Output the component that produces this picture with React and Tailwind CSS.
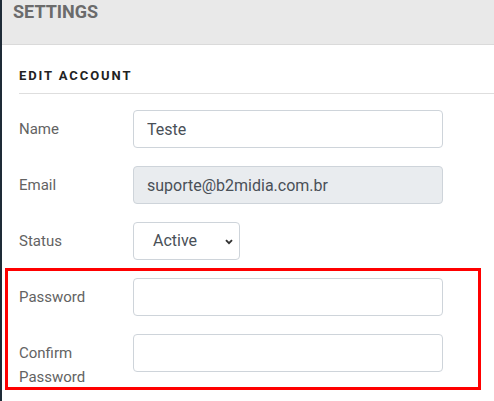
import React from "react";

function Row({ label, children, last }) {
  return (
    <div className={`flex ${last ? "" : "mb-[18px]"}`}>
      <div className="w-[114px] shrink-0 pt-[7px] text-[15px] leading-[24px] text-[#636363]">{label}</div>
      <div className="flex-1">{children}</div>
    </div>
  );
}

const inputCls =
  "w-[310px] h-[38px] rounded-[4px] border border-[#ced4da] bg-white pl-[13px] text-[16px] text-[#495057] outline-none";

export default function App() {
  return (
    <div className="relative flex h-[401px] w-full overflow-hidden bg-white" style={{ fontFamily: "Roboto, 'Liberation Sans', sans-serif" }}>
      <div className="w-[2px] shrink-0 bg-[#1e2b37]" />
      <div className="flex-1 min-w-0">
        <div className="h-[45px] border-b border-[#dadada] bg-[#e9e9e9] pl-[11px]">
          <div className="text-[18px] font-bold leading-[24px] text-[#6b6b6b]">SETTINGS</div>
        </div>
        <div className="pl-[17px]">
          <div className="mt-[23px] border-b border-[#dedede] pb-[9px]">
            <div className="text-[13px] font-bold leading-[16px] tracking-[1.9px] text-[#222]">EDIT ACCOUNT</div>
          </div>
          <div className="mt-[16px]">
            <Row label="Name">
              <input className={inputCls} defaultValue="Teste" />
            </Row>
            <Row label="Email">
              <input className={inputCls + " !bg-[#e9ecef]"} defaultValue="suporte@b2midia.com.br" readOnly />
            </Row>
            <Row label="Status">
              <div className="relative w-[107px] h-[38px] rounded-[4px] border border-[#ced4da] bg-white">
                <div className="pl-[19px] text-[16px] leading-[36px] text-[#495057]">Active</div>
                <svg className="absolute left-[91px] top-[16px]" width="8" height="6" viewBox="0 0 8 6">
                  <path d="M1 1.2 L4 4.2 L7 1.2" fill="none" stroke="#333" strokeWidth="1.9" />
                </svg>
              </div>
            </Row>
            <Row label="Password">
              <input className={inputCls} type="password" />
            </Row>
            <Row label={<>Confirm<br />Password</>} last>
              <input className={inputCls} type="password" />
            </Row>
          </div>
        </div>
      </div>
      <div className="absolute left-[5px] top-[268px] h-[122px] w-[476px] border-[3px] border-[#ff0000]" />
    </div>
  );
}
